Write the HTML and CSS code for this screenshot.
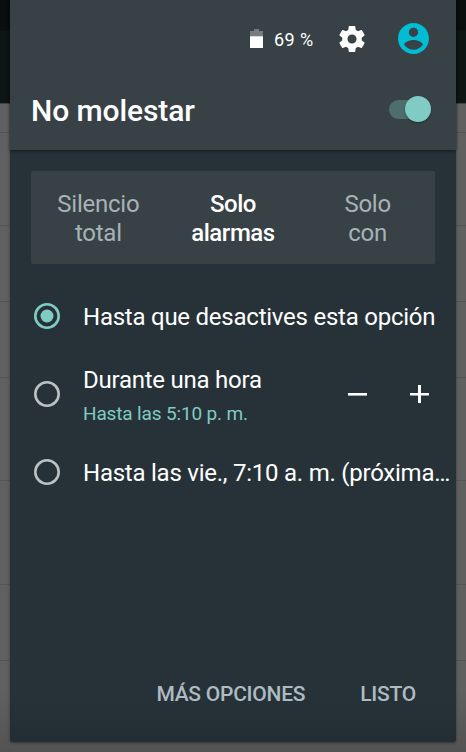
FILE: index.html
```html
<!DOCTYPE html>
<html lang="es">
<head>
<meta charset="utf-8">
<title>No molestar</title>
<link rel="stylesheet" href="styles.css">
</head>
<body>
<div class="screen">
  <div class="backdrop">
    <div class="appbar"></div>
    <div class="row first"></div>
    <div class="row tall"></div>
    <div class="row"></div>
    <div class="row"></div>
    <div class="row group"></div>
    <div class="row group last"></div>
    <div class="row"></div>
  </div>
  <main class="panel">
    <header class="header">
      <div class="status">
        <svg class="battery" viewBox="0 0 13 20"><path fill="#747d80" d="M4 0h5v2h4v6H0V2h4z"/><path fill="#fff" d="M0 7.3h13V19H0z"/></svg>
        <span class="percent">69 %</span>
        <svg class="gear" viewBox="2 2 20 20"><path fill="#fff" d="M19.43 12.98c.04-.32.07-.64.07-.98s-.03-.66-.07-.98l2.11-1.65c.19-.15.24-.42.12-.64l-2-3.46c-.12-.22-.39-.3-.61-.22l-2.49 1c-.52-.4-1.08-.73-1.69-.98l-.38-2.65C14.46 2.18 14.25 2 14 2h-4c-.25 0-.46.18-.49.42l-.38 2.65c-.61.25-1.17.59-1.69.98l-2.49-1c-.23-.09-.49 0-.61.22l-2 3.46c-.13.22-.07.49.12.64l2.11 1.65c-.04.32-.07.65-.07.98s.03.66.07.98l-2.11 1.65c-.19.15-.24.42-.12.64l2 3.46c.12.22.39.3.61.22l2.49-1c.52.4 1.08.73 1.69.98l.38 2.65c.03.24.24.42.49.42h4c.25 0 .46-.18.49-.42l.38-2.65c.61-.25 1.17-.59 1.69-.98l2.49 1c.23.09.49 0 .61-.22l2-3.46c.12-.22.07-.49-.12-.64l-2.11-1.65zM12 15.5c-1.93 0-3.5-1.57-3.5-3.5s1.57-3.5 3.5-3.5 3.5 1.57 3.5 3.5-1.57 3.5-3.5 3.5z"/></svg>
        <svg class="user" viewBox="2 2 20 20"><path fill="#00bcd4" d="M12 2C6.480 2 2 6.480 2 12s4.480 10 10 10 10-4.480 10-10S17.520 2 12 2zm0 3c1.660 0 3 1.340 3 3s-1.340 3-3 3-3-1.340-3-3 1.340-3 3-3zm0 14.200c-2.500 0-4.710-1.280-6-3.220.03-1.990 4-3.080 6-3.080 1.990 0 5.970 1.090 6 3.080-1.290 1.940-3.500 3.220-6 3.220z"/></svg>
      </div>
      <div class="title-row">
        <h1 class="title">No molestar</h1>
        <span class="switch"><span class="thumb"></span></span>
      </div>
    </header>
    <div class="segments">
      <div class="segment">Silencio<br>total</div>
      <div class="segment selected">Solo<br>alarmas</div>
      <div class="segment">Solo<br>con</div>
    </div>
    <div class="options">
      <div class="option">
        <svg class="radio checked" viewBox="0 0 26 26"><circle class="ring" cx="13" cy="13" r="11.700"/><circle class="dot" cx="13" cy="13" r="6.500"/></svg>
        <span class="label">Hasta que desactives esta opción</span>
      </div>
      <div class="option duration">
        <svg class="radio" viewBox="0 0 26 26"><circle class="ring" cx="13" cy="13" r="11.700"/></svg>
        <div class="text">
          <div class="label">Durante una hora</div>
          <div class="sub">Hasta las 5:10 p. m.</div>
        </div>
        <svg class="step minus" viewBox="0 0 19 19"><path fill="#fff" d="M0 8h19v2.600H0z"/></svg>
        <svg class="step" viewBox="0 0 19 19"><path fill="#fff" d="M0 8h8V0h3v8h8v2.600h-8V18H8v-7.400H0z"/></svg>
      </div>
      <div class="option">
        <svg class="radio" viewBox="0 0 26 26"><circle class="ring" cx="13" cy="13" r="11.700"/></svg>
        <span class="label">Hasta las vie., 7:10 a. m. (próxima…</span>
      </div>
    </div>
    <footer class="actions">
      <span>MÁS OPCIONES</span>
      <span>LISTO</span>
    </footer>
  </main>
</div>
</body>
</html>
```
FILE: styles.css
```css
* { box-sizing: border-box; }
body { margin: 0; font-family: Roboto, "Liberation Sans", sans-serif; color: #fff; }
.screen { display: grid; width: 466px; height: 752px; overflow: hidden; }
.backdrop, .panel { grid-area: 1 / 1; }
.backdrop { background: linear-gradient(#606060 0 690px, #535353 752px); }
.appbar { height: 104px; background: linear-gradient(#090e0e 0 30px, #0e1515 31px); border-bottom: 1px solid #404343; }
.row { height: 76px; border-bottom: 1px solid #545454; }
.row.first { height: 29px; }
.row.tall { height: 93px; }
.row.group { height: 103px; }
.row.last { height: 104px; }
.panel {
  z-index: 1;
  width: 446px;
  height: 742px;
  margin-left: 10px;
  display: flex;
  flex-direction: column;
  background: linear-gradient(#263238 0 700px, #232e34 742px);
  border-radius: 0 0 2px 2px;
  box-shadow: 0 1px 3px rgba(0, 0, 0, .4);
  white-space: nowrap;
}
.header { height: 150px; background: #384246; box-shadow: 0 1px 3px rgba(0, 0, 0, .5); }
.status { height: 78px; display: flex; align-items: center; padding-right: 26px; justify-content: flex-end; }
.battery { width: 13px; height: 20px; margin-right: 11px; }
.percent { width: 39px; font-size: 18px; letter-spacing: .4px; margin: 1px 26px 0 0; }
.gear { width: 26px; height: 26px; margin-right: 33px; }
.user { width: 31px; height: 31px; margin: -1px 1px 0 0; }
.title-row { height: 64px; display: flex; align-items: center; justify-content: space-between; padding: 0 25px 0 21px; }
.title { margin: 0; font-size: 30px; font-weight: 500; letter-spacing: -.1px; }
.switch { width: 42px; height: 19px; margin-top: -2px; border-radius: 10px; background: #4e6e6d; display: flex; justify-content: flex-end; align-items: center; }
.thumb { width: 26px; height: 26px; border-radius: 50%; background: #80cbc4; box-shadow: 0 1px 2px rgba(0, 0, 0, .35); }
.segments { display: grid; grid-template-columns: repeat(3, 1fr); width: 404px; height: 93px; margin: 21px 0 0 21px; padding-top: 19px; background: #384246; border-radius: 2px; }
.segment { text-align: center; font-size: 24px; line-height: 29px; letter-spacing: -.25px; color: #a7b2b8; }
.selected { font-weight: 500; letter-spacing: -.45px; color: #fff; }
.options { padding: 26px 0 0 24px; }
.option { display: flex; align-items: center; height: 52px; }
.duration { height: 104px; }
.radio { flex: none; width: 26px; height: 26px; margin-right: 23px; }
.ring { fill: none; stroke: #bcc1c3; stroke-width: 2.600; }
.checked .ring { stroke: #80cbc4; }
.dot { fill: #80cbc4; }
.label { margin-top: 2px; font-size: 24px; line-height: 30px; letter-spacing: -.24px; }
.text { width: 265px; padding-top: 5px; }
.text .label { margin: 0; }
.sub { margin-top: 5px; font-size: 19px; line-height: 28px; letter-spacing: -.15px; color: #80cbc4; }
.step { width: 19px; height: 19px; }
.minus { margin-right: 43px; }
.actions { margin-top: auto; height: 97px; display: flex; align-items: center; justify-content: flex-end; gap: 55px; padding-right: 40px; font-size: 21px; font-weight: 500; letter-spacing: -.25px; color: #aebbc1; }
```
